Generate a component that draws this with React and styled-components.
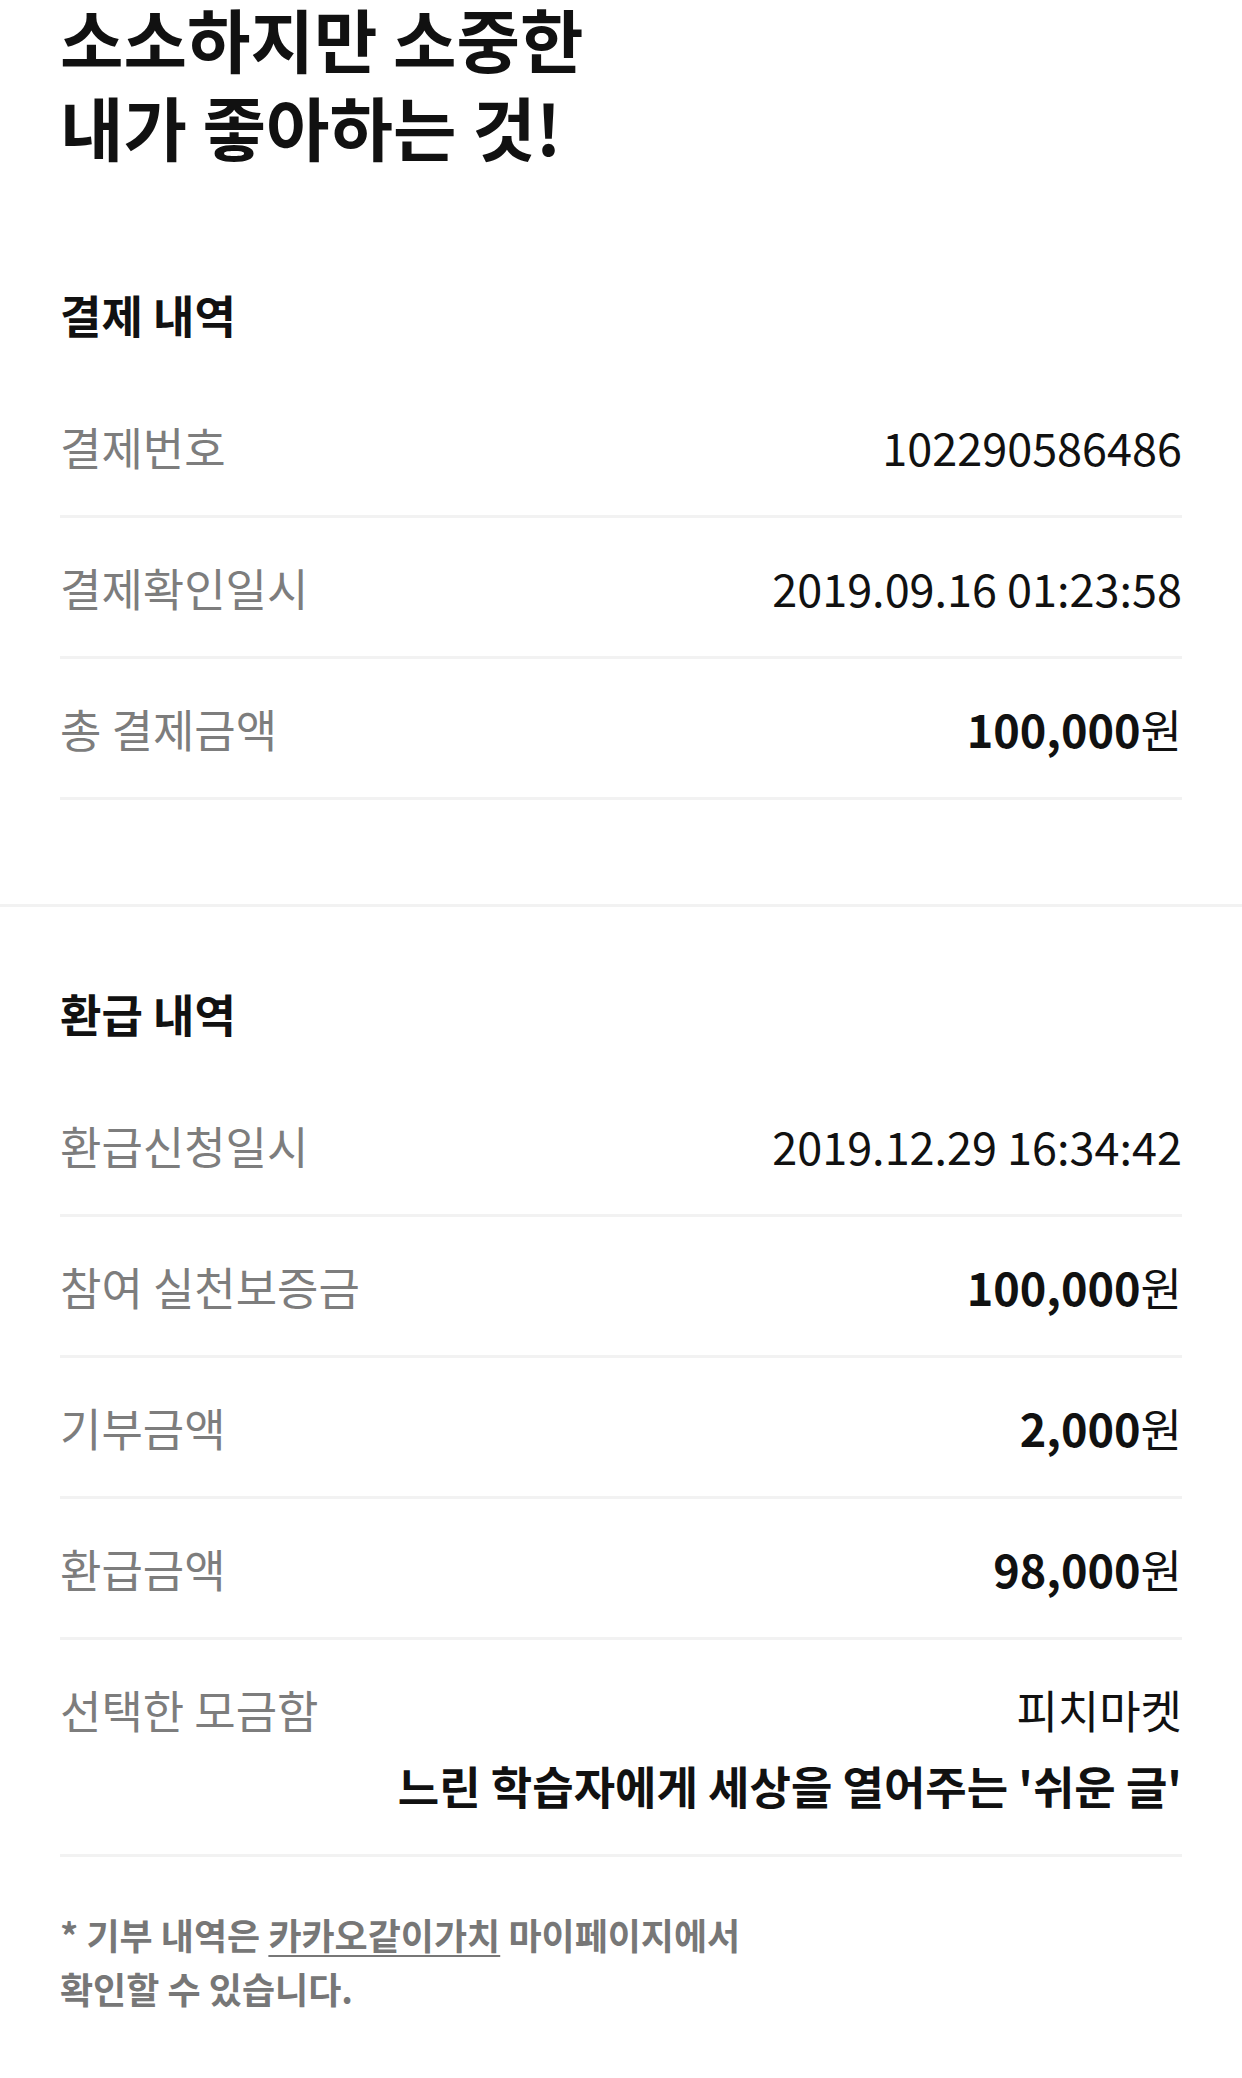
import React from "react";
import styled, { createGlobalStyle } from "styled-components";

const GlobalStyle = createGlobalStyle`
    body {
        margin: 0;
        background: #fff;
        font-family: "Noto Sans CJK KR", "Noto Sans", sans-serif;
        color: #111;
    }
`;

const PAYMENT = [
    { label: '결제번호', value: '102290586486' },
    { label: '결제확인일시', value: '2019.09.16 01:23:58' },
    { label: '총 결제금액', amount: '100,000' },
];

const REFUND = [
    { label: '환급신청일시', value: '2019.12.29 16:34:42' },
    { label: '참여 실천보증금', amount: '100,000' },
    { label: '기부금액', amount: '2,000' },
    { label: '환급금액', amount: '98,000' },
];

const InfoRow = ({ item }) => (
    <Row>
        <Label>{item.label}</Label>
        <Value>
            {item.amount ? (<><Amount>{item.amount}</Amount>원</>) : item.value}
        </Value>
    </Row>
);

const App = () => {
    return (
        <Page>
            <GlobalStyle />
            <Title>소소하지만 소중한<br />내가 좋아하는 것!</Title>

            <Section $divider $top="115px" $bottom="104px">
                <SectionTitle>결제 내역</SectionTitle>
                {PAYMENT.map((item, index) => <InfoRow key={index} item={item} />)}
            </Section>

            <Section $top="77px" $bottom="50px">
                <SectionTitle>환급 내역</SectionTitle>
                {REFUND.map((item, index) => <InfoRow key={index} item={item} />)}
                <Row>
                    <Label>선택한 모금함</Label>
                    <ValueStack>
                        <Value>피치마켓</Value>
                        <Value $bold>느린 학습자에게 세상을 열어주는 '쉬운 글'</Value>
                    </ValueStack>
                </Row>
            </Section>

            <Notice>
                * 기부 내역은 <Link>카카오같이가치</Link> 마이페이지에서<br />
                확인할 수 있습니다.
            </Notice>
        </Page>
    );
};

const Page = styled.div`
    width: 1242px;
    min-height: 2078px;
    overflow: hidden;
`;

const Title = styled.h1`
    margin: -6px 0 0;
    padding: 0 60px;
    font-size: 69px;
    font-weight: 700;
    line-height: 88px;
    color: #111;
`;

const Section = styled.section`
    margin-top: ${props => props.$top};
    padding: 0 60px ${props => props.$bottom};
    border-bottom: ${props => props.$divider ? '3px solid #f2f2f2' : 'none'};
`;

const SectionTitle = styled.h2`
    margin: 0 0 32px;
    font-size: 45px;
    font-weight: 700;
    line-height: 60px;
    color: #111;
`;

const Row = styled.div`
    display: flex;
    justify-content: space-between;
    align-items: flex-start;
    padding: 40px 0 38px;
    border-bottom: 3px solid #f2f2f2;
`;

const Label = styled.span`
    font-size: 45px;
    line-height: 60px;
    color: #7d7d7d;
    white-space: nowrap;
`;

const ValueStack = styled.div`
    display: flex;
    flex-direction: column;
    align-items: flex-end;
    gap: 16px;
`;

const Value = styled.span`
    font-size: 45px;
    line-height: 60px;
    font-weight: ${props => props.$bold ? 700 : 400};
    color: #111;
    white-space: nowrap;
`;

const Amount = styled.b`
    font-weight: 700;
`;

const Notice = styled.p`
    margin: 0;
    padding: 0 60px;
    font-size: 36px;
    font-weight: 700;
    line-height: 54px;
    color: #777;
`;

const Link = styled.span`
    text-decoration: underline;
    text-underline-offset: 5px;
    text-decoration-thickness: 2px;
`;

export default App;
